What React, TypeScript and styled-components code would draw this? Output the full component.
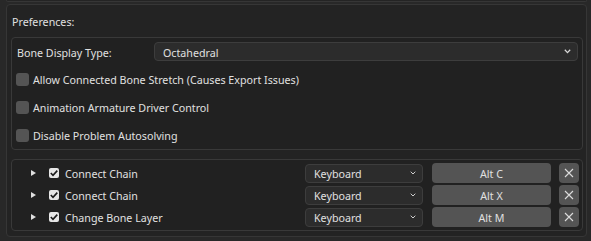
import React from "react";
import styled, { createGlobalStyle } from "styled-components";

const Global = createGlobalStyle`
  html, body { margin: 0; padding: 0; background: #282828; }
  body { font-family: "Noto Sans", "DejaVu Sans", sans-serif; font-size: 10.7px; color: #e0e0e0; }
  * { box-sizing: border-box; }
`;

const Page = styled.div`
  width: 591px;
  height: 241px;
  display: flex;
  flex-direction: column;
  padding: 0 4px 4px 6px;
  background: #282828;
`;

const PrevEdge = styled.div`
  height: 2px;
  border: 1px solid #363636;
  border-top: none;
  border-radius: 0 0 4px 4px;
  background: #242424;
`;

const Panel = styled.div`
  margin-top: 2px;
  flex: 1;
  display: flex;
  flex-direction: column;
  background: #232323;
  border: 1px solid #363636;
  border-radius: 4px;
  padding: 0 3px 0 4px;
`;

const Header = styled.div`
  height: 32px;
  display: flex;
  align-items: center;
  padding-left: 1px;
`;

const Box = styled.div<{ $pad: string }>`
  background: #212121;
  border: 1px solid #393939;
  border-radius: 4px;
  padding: ${(p) => p.$pad};
  display: flex;
  flex-direction: column;
`;

const Text = styled.span`
  padding-top: 2px;
  line-height: 12px;
`;

const PropRow = styled.div`
  height: 19px;
  display: flex;
  align-items: center;
`;

const PropLabel = styled.div`
  width: 138px;
  padding-left: 1px;
  display: flex;
`;

const Select = styled.div<{ $w?: number }>`
  height: 19px;
  ${(p) => (p.$w ? `width: ${p.$w}px;` : "flex: 1;")}
  display: flex;
  align-items: center;
  justify-content: space-between;
  padding: 0 6px 0 8px;
  background: #2c2c2c;
  border: 1px solid #3d3d3d;
  border-radius: 4px;
`;

const Spacer = styled.div<{ $h: number }>`
  height: ${(p) => p.$h}px;
  flex-shrink: 0;
`;

const CheckRow = styled.div`
  height: 28px;
  display: flex;
  align-items: center;
  gap: 4px;
`;

const CheckBox = styled.div`
  width: 13px;
  height: 13px;
  border-radius: 3px;
  background: #545454;
`;

const KeyList = styled.div`
  display: flex;
  flex-direction: column;
  gap: 2px;
`;

const KeyRow = styled.div`
  height: 20px;
  display: flex;
  align-items: center;
`;

const Arrow = styled.div`
  width: 33px;
  padding-left: 15px;
  display: flex;
  align-items: center;
`;

const SmallCheck = styled.div`
  width: 10px;
  height: 10px;
  border-radius: 2px;
  background: #e6e6e6;
  display: flex;
  align-items: center;
  justify-content: center;
`;

const KeyLabel = styled.div`
  flex: 1;
  padding-left: 6px;
  display: flex;
`;

const KeyButton = styled.div`
  width: 119px;
  height: 20px;
  margin-left: 9px;
  background: #545454;
  border-radius: 4px;
  display: flex;
  align-items: center;
  justify-content: center;
`;

const XButton = styled.div`
  width: 20px;
  height: 20px;
  margin-left: 8px;
  background: #545454;
  border-radius: 4px;
  display: flex;
  align-items: center;
  justify-content: center;
`;

const Chevron = ({ small }: { small?: boolean }) =>
  small ? (
    <svg width="6" height="4" viewBox="0 0 6 4">
      <path d="M0.7 0.7 L3 3 L5.3 0.7" fill="none" stroke="#cfcfcf" strokeWidth="1" />
    </svg>
  ) : (
    <svg width="7" height="5" viewBox="0 0 7 5">
      <path d="M0.8 0.8 L3.5 3.6 L6.2 0.8" fill="none" stroke="#d8d8d8" strokeWidth="1.3" />
    </svg>
  );

const Tri = () => (
  <svg width="5" height="6" viewBox="0 0 5 6">
    <path d="M0 0 L5 3 L0 6 Z" fill="#e0e0e0" />
  </svg>
);

const Tick = () => (
  <svg width="10" height="10" viewBox="0 0 10 10">
    <path d="M1.8 5 L4 7.3 L8.3 2.6" fill="none" stroke="#1a1a1a" strokeWidth="1.6" />
  </svg>
);

const Cross = () => (
  <svg width="10" height="10" viewBox="0 0 10 10">
    <path d="M1 1 L9 9 M9 1 L1 9" stroke="#dcdcdc" strokeWidth="1.1" />
  </svg>
);

const checks = [
  "Allow Connected Bone Stretch (Causes Export Issues)",
  "Animation Armature Driver Control",
  "Disable Problem Autosolving",
];

const keymaps = [
  { name: "Connect Chain", key: "Alt C" },
  { name: "Connect Chain", key: "Alt X" },
  { name: "Change Bone Layer", key: "Alt M" },
];

export default function App() {
  return (
    <Page>
      <Global />
      <PrevEdge />
      <Panel>
        <Header>
          <Text>Preferences:</Text>
        </Header>
        <Box $pad="4px 4px 0 4px">
          <PropRow>
            <PropLabel>
              <Text>Bone Display Type:</Text>
            </PropLabel>
            <Select>
              <Text>Octahedral</Text>
              <Chevron />
            </Select>
          </PropRow>
          <Spacer $h={4} />
          {checks.map((c) => (
            <CheckRow key={c}>
              <CheckBox />
              <Text>{c}</Text>
            </CheckRow>
          ))}
        </Box>
        <Spacer $h={9} />
        <Box $pad="3px 3px 3px 4px">
          <KeyList>
            {keymaps.map((k, i) => (
              <KeyRow key={i}>
                <Arrow>
                  <Tri />
                </Arrow>
                <SmallCheck>
                  <Tick />
                </SmallCheck>
                <KeyLabel>
                  <Text>{k.name}</Text>
                </KeyLabel>
                <Select $w={118}>
                  <Text>Keyboard</Text>
                  <Chevron small />
                </Select>
                <KeyButton>
                  <Text>{k.key}</Text>
                </KeyButton>
                <XButton>
                  <Cross />
                </XButton>
              </KeyRow>
            ))}
          </KeyList>
        </Box>
      </Panel>
    </Page>
  );
}
